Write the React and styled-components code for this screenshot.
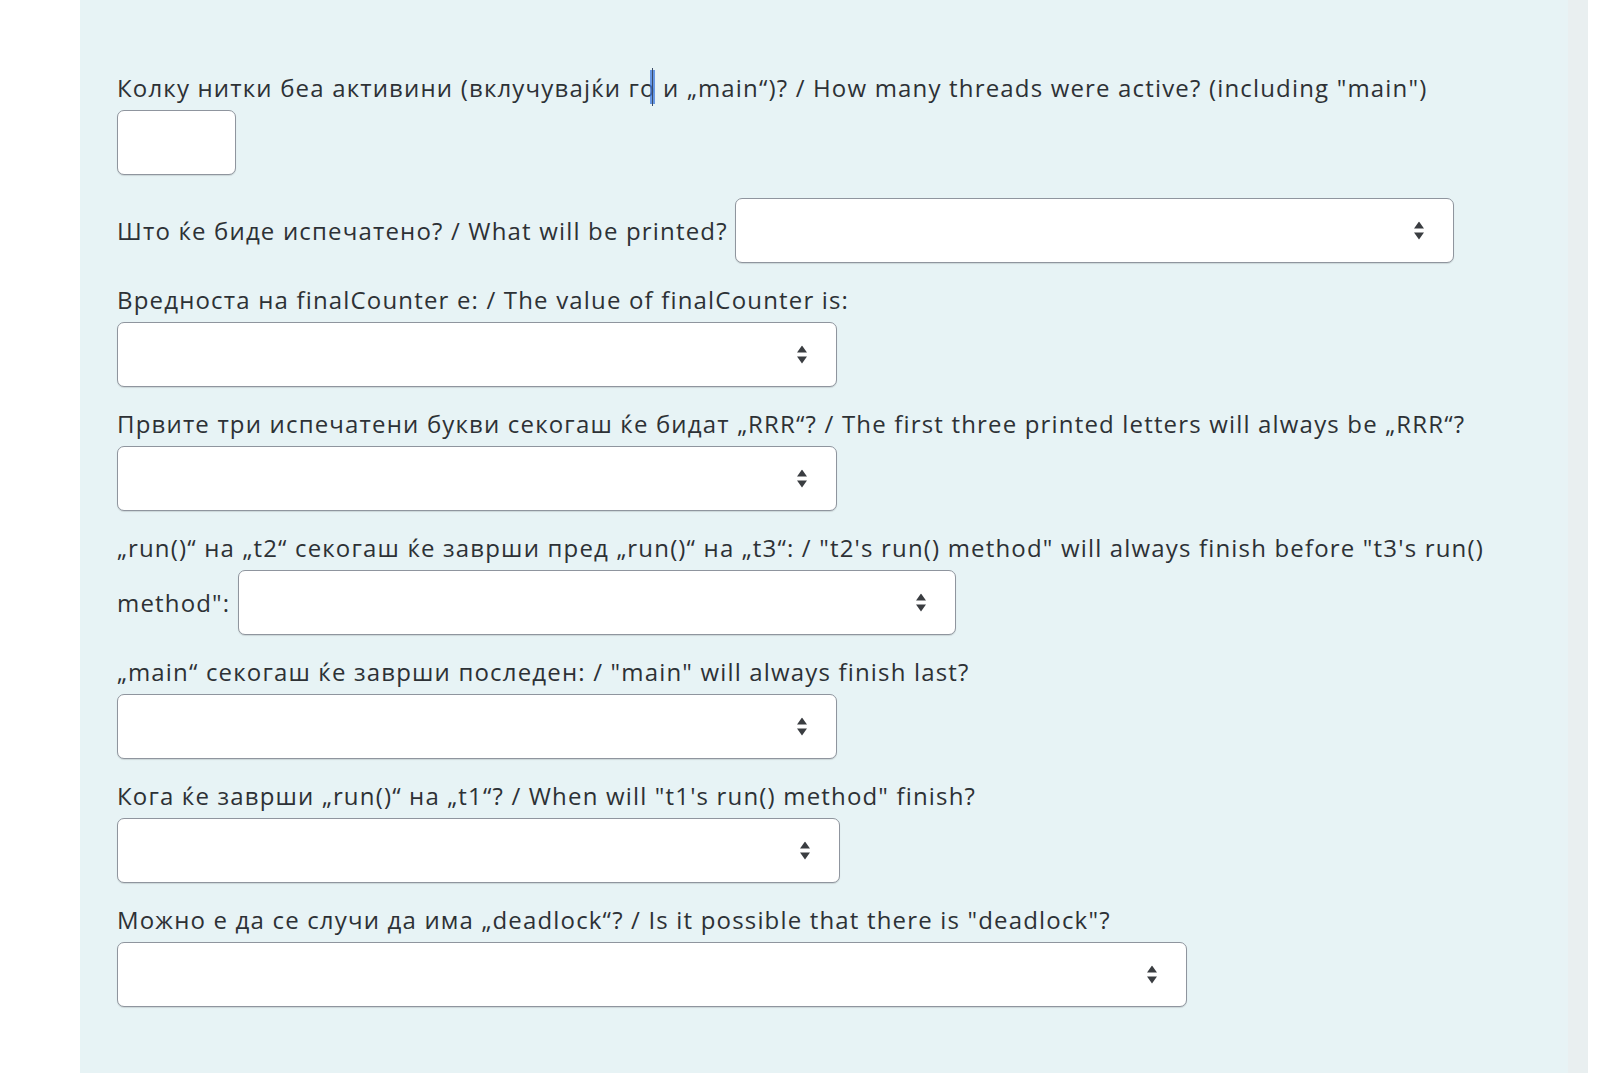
import React from 'react';
import styled, { createGlobalStyle } from 'styled-components';

const GlobalStyle = createGlobalStyle`
    html, body {
        margin: 0;
        padding: 0;
        background: #ffffff;
    }
    body {
        font-family: "Open Sans", "Noto Sans", sans-serif;
        color: #2d3135;
    }
`;

const Page = styled.div`
    display: flex;
    min-height: 1073px;
    padding-left: 80px;
    padding-right: 12px;
    box-sizing: border-box;
`;

const Panel = styled.div`
    flex: 1;
    background: #e7f3f5;
    border-right: 20px solid #e9eff0;
    padding: 70px 37px 0;
`;

const Form = styled.div`
    display: flex;
    flex-direction: column;
    gap: 19px;
`;

const Question = styled.div`
    display: flex;
    flex-direction: column;
    align-items: flex-start;
    margin-top: ${props => props.$offset || 0}px;
`;

const Label = styled.div`
    font-size: 24px;
    line-height: 36px;
    letter-spacing: 1.17px;
    white-space: nowrap;
    margin-bottom: 4px;
`;

const InlineRow = styled.div`
    display: flex;
    align-items: center;
    gap: ${props => props.$gap || 7}px;
    font-size: 24px;
    letter-spacing: 1.17px;
    white-space: nowrap;
`;

const TextInput = styled.input`
    width: ${props => props.$width}px;
    height: 65px;
    box-sizing: border-box;
    border: 1px solid #8f959e;
    border-radius: 7px;
    background: #ffffff;
    box-shadow: 0 1px 1px rgba(0, 0, 0, 0.12);
    font-size: 22px;
    padding: 0 12px;
    outline: none;
`;

const SelectWrap = styled.div`
    position: relative;
    width: ${props => props.$width}px;
    height: 65px;
    flex-shrink: 0;
`;

const NativeSelect = styled.select`
    appearance: none;
    width: 100%;
    height: 100%;
    box-sizing: border-box;
    border: 1px solid #8f959e;
    border-radius: 7px;
    background: #ffffff;
    box-shadow: 0 1px 1px rgba(0, 0, 0, 0.12);
    font-family: inherit;
    font-size: 22px;
    color: #2d3135;
    padding: 0 50px 0 14px;
    outline: none;
`;

const Arrow = styled.svg`
    position: absolute;
    right: 30px;
    top: 50%;
    transform: translateY(-50%);
    pointer-events: none;
`;

const CursorMark = styled.span`
    position: relative;
    display: inline-block;
    width: 0;
    height: 0;
`;

const Beam = styled.span`
    position: absolute;
    left: 10px;
    top: -27px;
    width: 5px;
    height: 34px;
    background: rgba(60, 120, 220, 0.75);
    &::after {
        content: '';
        position: absolute;
        left: 2px;
        top: -2px;
        width: 1px;
        height: 38px;
        background: #3a4a66;
    }
`;

function Select({ width }) {
    return (
        <SelectWrap $width={width}>
            <NativeSelect defaultValue="">
                <option value=""></option>
            </NativeSelect>
            <Arrow width="10" height="19" viewBox="0 0 10 19">
                <path d="M5 0 L10 7 L0 7 Z" fill="#3a3d41" />
                <path d="M0 11 L10 11 L5 18 Z" fill="#3a3d41" />
            </Arrow>
        </SelectWrap>
    );
}

export default function App() {
    return (
        <>
            <GlobalStyle />
            <Page>
                <Panel>
                    <Form>
                        <Question>
                            <Label>
                                Колку нитки беа активини (вклучувајќи г<CursorMark><Beam /></CursorMark>о и „main“)? / How many threads were active? (including "main")
                            </Label>
                            <TextInput type="text" $width={119} />
                        </Question>
                        <Question $offset={4}>
                            <InlineRow>
                                <span>Што ќе биде испечатено? / What will be printed?</span>
                                <Select width={719} />
                            </InlineRow>
                        </Question>
                        <Question>
                            <Label>Вредноста на finalCounter е: / The value of finalCounter is:</Label>
                            <Select width={720} />
                        </Question>
                        <Question>
                            <Label>Првите три испечатени букви секогаш ќе бидат „RRR“? / The first three printed letters will always be „RRR“?</Label>
                            <Select width={720} />
                        </Question>
                        <Question>
                            <Label>„run()“ на „t2“ секогаш ќе заврши пред „run()“ на „t3“: / "t2's run() method" will always finish before "t3's run()</Label>
                            <InlineRow $gap={8}>
                                <span>method":</span>
                                <Select width={718} />
                            </InlineRow>
                        </Question>
                        <Question>
                            <Label>„main“ секогаш ќе заврши последен: / "main" will always finish last?</Label>
                            <Select width={720} />
                        </Question>
                        <Question>
                            <Label>Кога ќе заврши „run()“ на „t1“? / When will "t1's run() method" finish?</Label>
                            <Select width={723} />
                        </Question>
                        <Question>
                            <Label>Можно е да се случи да има „deadlock“? / Is it possible that there is "deadlock"?</Label>
                            <Select width={1070} />
                        </Question>
                    </Form>
                </Panel>
            </Page>
        </>
    );
}
